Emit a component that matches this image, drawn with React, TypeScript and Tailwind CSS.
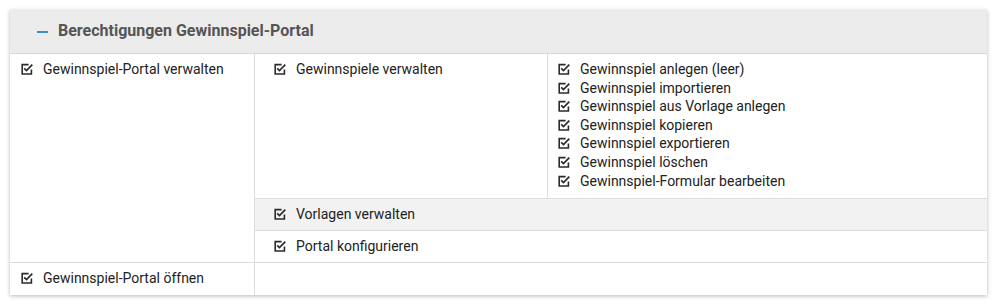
import React from 'react';

const CheckIcon: React.FC = () => (
  <svg width="12" height="13" viewBox="0 0 12 13" fill="none" className="shrink-0 mt-[2px]">
    <path d="M7.6 2.6H1.2V12H10.4V7.6" stroke="#2b2b2b" strokeWidth="1.6" strokeLinejoin="miter" />
    <path d="M3.2 6.3L5.5 8.6L11.3 2.6" stroke="#2b2b2b" strokeWidth="1.7" />
  </svg>
);

const Perm: React.FC<{ label: string }> = ({ label }) => (
  <div className="flex items-start gap-[10px]">
    <CheckIcon />
    <span>{label}</span>
  </div>
);

const gameRights = [
  'Gewinnspiel anlegen (leer)',
  'Gewinnspiel importieren',
  'Gewinnspiel aus Vorlage anlegen',
  'Gewinnspiel kopieren',
  'Gewinnspiel exportieren',
  'Gewinnspiel löschen',
  'Gewinnspiel-Formular bearbeiten',
];

export default function App() {
  return (
    <div className="w-[998px] h-[305px] bg-white pt-[10px] pl-[10px]" style={{ fontFamily: 'Roboto, "Liberation Sans", sans-serif' }}>
      <div className="w-[977px] bg-white shadow-[0_1px_4px_rgba(0,0,0,0.28)] text-[14px] leading-[18.6px] text-[#222]">
        <div className="h-[44px] bg-[#ececec] border-b border-[#d8d8d8] flex items-center pl-[27px] gap-[10px]">
          <span className="block w-[11px] h-[2px] bg-[#3f8ccb]" />
          <h2 className="text-[16px] font-bold text-[#555]">Berechtigungen Gewinnspiel-Portal</h2>
        </div>

        <div className="flex border-b border-[#dcdcdc]">
          <div className="w-[245px] border-r border-[#dcdcdc] pl-[11px] pt-[6px]">
            <Perm label="Gewinnspiel-Portal verwalten" />
          </div>
          <div className="flex-1">
            <div className="flex border-b border-[#dcdcdc]">
              <div className="w-[293px] border-r border-[#dcdcdc] pl-[19px] pt-[6px]">
                <Perm label="Gewinnspiele verwalten" />
              </div>
              <div className="flex-1 pl-[10px] pt-[6px] pb-[8px]">
                {gameRights.map((r) => (
                  <Perm key={r} label={r} />
                ))}
              </div>
            </div>
            <div className="h-[32px] bg-[#f2f2f2] border-b border-[#dcdcdc] pl-[19px] pt-[6px]">
              <Perm label="Vorlagen verwalten" />
            </div>
            <div className="h-[31px] pl-[19px] pt-[6px]">
              <Perm label="Portal konfigurieren" />
            </div>
          </div>
        </div>

        <div className="flex h-[32px]">
          <div className="w-[245px] border-r border-[#dcdcdc] pl-[11px] pt-[6px]">
            <Perm label="Gewinnspiel-Portal öffnen" />
          </div>
          <div className="flex-1" />
        </div>
      </div>
    </div>
  );
}
